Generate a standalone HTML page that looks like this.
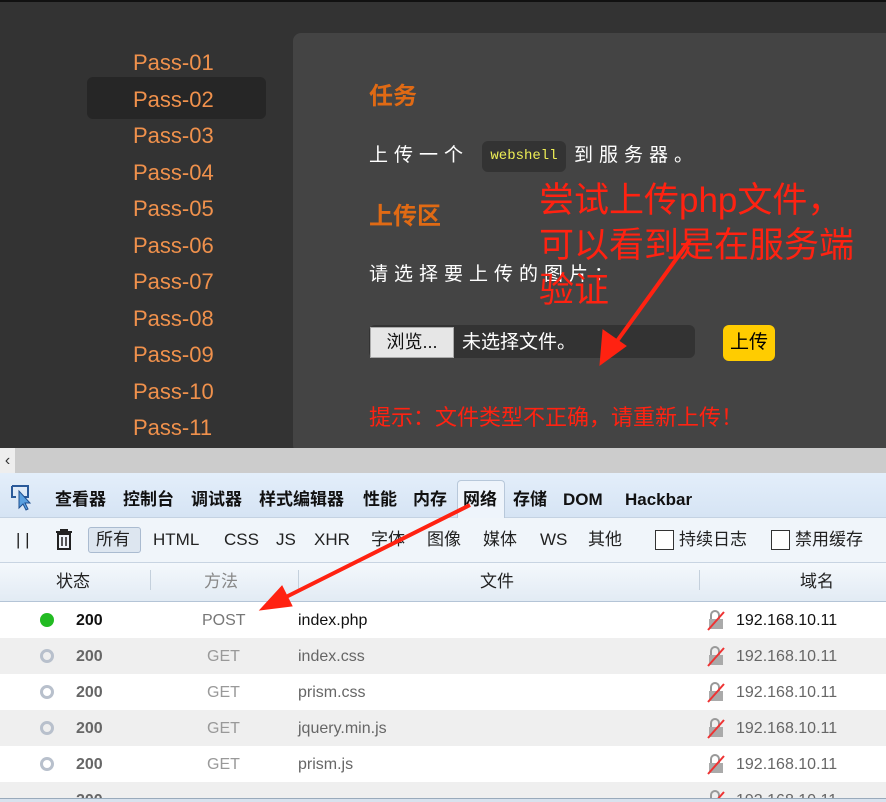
<!DOCTYPE html>
<html><head><meta charset="utf-8"><style>
*{margin:0;padding:0;box-sizing:border-box}
body{width:886px;height:802px;overflow:hidden;background:#333;font-family:"Liberation Sans","Noto Sans CJK SC",sans-serif;position:relative}
.a{position:absolute;white-space:nowrap}
.nav{position:absolute;left:133px;color:#f0914c;font-size:22px;line-height:26px}
.hl{position:absolute;left:87px;top:77px;width:179px;height:42px;background:#262626;border-radius:6px}
.panel{position:absolute;left:293px;top:33px;width:600px;height:420px;background:#444;border-radius:8px}
.or{color:#e06a14;font-weight:bold;font-size:24px;line-height:30px}
.wt{color:#fff;font-size:19px;letter-spacing:6px;line-height:24px}
.red{color:#f21;font-size:35px;line-height:45px;letter-spacing:0}
.dev{position:absolute;left:0;top:448px;width:886px;height:354px;background:#fff}
.tb{font-size:17px;font-weight:bold;color:#111;line-height:20px;top:42px}
.fl{font-size:17px;color:#222;line-height:20px;top:82px}
.row{position:absolute;left:0;width:886px;height:36px;font-size:16px}
.row span{position:absolute;top:9px;line-height:20px}
</style></head><body>
<div style="position:absolute;left:0;top:0;width:886px;height:2px;background:#111"></div>
<div class="hl"></div>
<div class="nav" style="top:50px">Pass-01</div>
<div class="nav" style="top:87px">Pass-02</div>
<div class="nav" style="top:123px">Pass-03</div>
<div class="nav" style="top:160px">Pass-04</div>
<div class="nav" style="top:196px">Pass-05</div>
<div class="nav" style="top:233px">Pass-06</div>
<div class="nav" style="top:269px">Pass-07</div>
<div class="nav" style="top:306px">Pass-08</div>
<div class="nav" style="top:342px">Pass-09</div>
<div class="nav" style="top:379px">Pass-10</div>
<div class="nav" style="top:415px">Pass-11</div>
<div class="panel"></div>
<div class="a or" style="left:369px;top:82px">任务</div>
<div class="a wt" style="left:369px;top:144px">上传一个</div>
<div class="a" style="left:482px;top:141px;width:84px;height:31px;background:#333;border-radius:6px;color:#ee5;font-family:'Liberation Mono',monospace;font-size:14px;line-height:31px;text-align:center">webshell</div>
<div class="a wt" style="left:574px;top:144px">到服务器。</div>
<div class="a or" style="left:369px;top:202px">上传区</div>
<div class="a wt" style="left:369px;top:263px">请选择要上传的图片：</div>
<div class="a" style="left:369px;top:325px;width:326px;height:33px;background:#333;border-radius:6px"></div>
<div class="a" style="left:370px;top:327px;width:84px;height:31px;background:#e6e6e6;border:1px solid #aaa;font-size:18px;color:#111;text-align:center;line-height:29px">浏览...</div>
<div class="a" style="left:462px;top:331px;color:#fff;font-size:19px;line-height:24px">未选择文件。</div>
<div class="a" style="left:723px;top:325px;width:52px;height:36px;background:#fc0;border-radius:6px;font-size:19px;text-align:center;line-height:36px;color:#000">上传</div>
<div class="a" style="left:369px;top:404px;color:#f21;font-size:22px;line-height:28px">提示：文件类型不正确，请重新上传！</div>
<div class="a red" style="left:539px;top:178px">尝试上传php文件，<br>可以看到是在服务端<br>验证</div>
<div class="dev">
<div style="position:absolute;left:0;top:0;width:886px;height:25px;background:#ccc"></div>
<div style="position:absolute;left:0;top:0;width:15px;height:25px;background:#eee;font-size:16px;text-align:center;line-height:25px;color:#333">‹</div>
<div style="position:absolute;left:0;top:25px;width:886px;height:45px;background:linear-gradient(#e3eefa,#d6e4f4);border-bottom:1px solid #c4d2e2"></div>
<div style="position:absolute;left:457px;top:32px;width:48px;height:39px;background:#eef4fb;border:1px solid #b8c8da;border-bottom:none;border-radius:4px 4px 0 0"></div>
<svg class="a" style="left:10px;top:36px" width="26" height="28"><path d="M2 2 H18 V13 H14" fill="none" stroke="#2a5a9a" stroke-width="2"/><path d="M2 2 V13 H6" fill="none" stroke="#2a5a9a" stroke-width="2"/><path d="M9 7 L9 24 L13 20 L16 26 L18 25 L15 19 L20 19 Z" fill="#5aa0e0" stroke="#1f4f8f"/></svg>
<div class="a tb" style="left:55px">查看器</div>
<div class="a tb" style="left:123px">控制台</div>
<div class="a tb" style="left:191px">调试器</div>
<div class="a tb" style="left:259px">样式编辑器</div>
<div class="a tb" style="left:363px">性能</div>
<div class="a tb" style="left:413px">内存</div>
<div class="a tb" style="left:463px">网络</div>
<div class="a tb" style="left:513px">存储</div>
<div class="a tb" style="left:563px">DOM</div>
<div class="a tb" style="left:625px">Hackbar</div>
<div style="position:absolute;left:0;top:70px;width:886px;height:45px;background:#f0f5fa;border-bottom:1px solid #c8d4e2"></div>
<div class="a fl" style="left:16px">| |</div>
<svg class="a" style="left:54px;top:80px" width="20" height="22"><path d="M2 4 H18 M7 4 V2 H13 V4" stroke="#222" stroke-width="2" fill="none"/><rect x="4" y="6" width="12" height="15" fill="none" stroke="#222" stroke-width="2"/><path d="M8 9 V18 M12 9 V18" stroke="#222" stroke-width="1.5"/></svg>
<div class="a" style="left:88px;top:79px;width:53px;height:26px;background:#dde6f0;border:1px solid #aabbd0;border-radius:3px"></div>
<div class="a fl" style="left:96px">所有</div>
<div class="a fl" style="left:153px">HTML</div>
<div class="a fl" style="left:224px">CSS</div>
<div class="a fl" style="left:276px">JS</div>
<div class="a fl" style="left:314px">XHR</div>
<div class="a fl" style="left:371px">字体</div>
<div class="a fl" style="left:427px">图像</div>
<div class="a fl" style="left:483px">媒体</div>
<div class="a fl" style="left:540px">WS</div>
<div class="a fl" style="left:588px">其他</div>
<div class="a" style="left:655px;top:82px;width:19px;height:20px;border:1px solid #333;background:#fff"></div>
<div class="a fl" style="left:679px">持续日志</div>
<div class="a" style="left:771px;top:82px;width:19px;height:20px;border:1px solid #333;background:#fff"></div>
<div class="a fl" style="left:795px">禁用缓存</div>
<div style="position:absolute;left:0;top:115px;width:886px;height:39px;background:linear-gradient(#f4f8fc,#e2ebf4);border-bottom:1px solid #b4c4d6"></div>
<div class="a fl" style="left:56px;top:124px">状态</div>
<div class="a fl" style="left:204px;top:124px;color:#888">方法</div>
<div class="a fl" style="left:480px;top:124px">文件</div>
<div class="a fl" style="left:800px;top:124px">域名</div>
<div class="a" style="left:150px;top:122px;width:1px;height:20px;background:#c4d0dc"></div>
<div class="a" style="left:298px;top:122px;width:1px;height:20px;background:#c4d0dc"></div>
<div class="a" style="left:699px;top:122px;width:1px;height:20px;background:#c4d0dc"></div>
<div class="row" style="top:154px;background:#fff;color:#111"><span style="left:40px;top:11px;width:14px;height:14px;border-radius:50%;background:#2b2"></span><span style="left:76px;font-weight:bold">200</span><span style="left:202px;color:#777">POST</span><span style="left:298px">index.php</span><span style="left:736px">192.168.10.11</span></div>
<div class="row" style="top:190px;background:#efefef;color:#666"><span style="left:40px;top:11px;width:14px;height:14px;border-radius:50%;border:3px solid #b8c0cc"></span><span style="left:76px;font-weight:bold">200</span><span style="left:207px;color:#999">GET</span><span style="left:298px">index.css</span><span style="left:736px">192.168.10.11</span></div>
<div class="row" style="top:226px;background:#fff;color:#666"><span style="left:40px;top:11px;width:14px;height:14px;border-radius:50%;border:3px solid #b8c0cc"></span><span style="left:76px;font-weight:bold">200</span><span style="left:207px;color:#999">GET</span><span style="left:298px">prism.css</span><span style="left:736px">192.168.10.11</span></div>
<div class="row" style="top:262px;background:#efefef;color:#666"><span style="left:40px;top:11px;width:14px;height:14px;border-radius:50%;border:3px solid #b8c0cc"></span><span style="left:76px;font-weight:bold">200</span><span style="left:207px;color:#999">GET</span><span style="left:298px">jquery.min.js</span><span style="left:736px">192.168.10.11</span></div>
<div class="row" style="top:298px;background:#fff;color:#666"><span style="left:40px;top:11px;width:14px;height:14px;border-radius:50%;border:3px solid #b8c0cc"></span><span style="left:76px;font-weight:bold">200</span><span style="left:207px;color:#999">GET</span><span style="left:298px">prism.js</span><span style="left:736px">192.168.10.11</span></div>
<div class="row" style="top:334px;background:#efefef;color:#666;height:16px;overflow:hidden"><span style="left:76px;font-weight:bold">200</span><span style="left:736px">192.168.10.11</span></div>
<svg class="a" style="left:706px;top:162px" width="22" height="190">
<g id="l"><path d="M5 9 V5 A4 4 0 0 1 13 5 V9" fill="none" stroke="#999" stroke-width="2"/><rect x="3" y="9" width="14" height="10" fill="#aaa"/><line x1="2" y1="20" x2="18" y2="2" stroke="#e33" stroke-width="2"/></g>
<use href="#l" y="36"/><use href="#l" y="72"/><use href="#l" y="108"/><use href="#l" y="144"/><use href="#l" y="180"/>
</svg>
<div style="position:absolute;left:0;top:350px;width:886px;height:4px;background:#d8e2ee;border-top:1px solid #9ab"></div>
</div>
<svg class="a" style="left:0;top:0" width="886" height="802"><g fill="#f21" stroke="#f21"><line x1="690" y1="240" x2="612" y2="348" stroke-width="4"/><path d="M600 365 L603 330 L626 346 Z"/><line x1="470" y1="505" x2="280" y2="600" stroke-width="4"/><path d="M260 610 L282 586 L292 606 Z"/></g></svg>
</body></html>
